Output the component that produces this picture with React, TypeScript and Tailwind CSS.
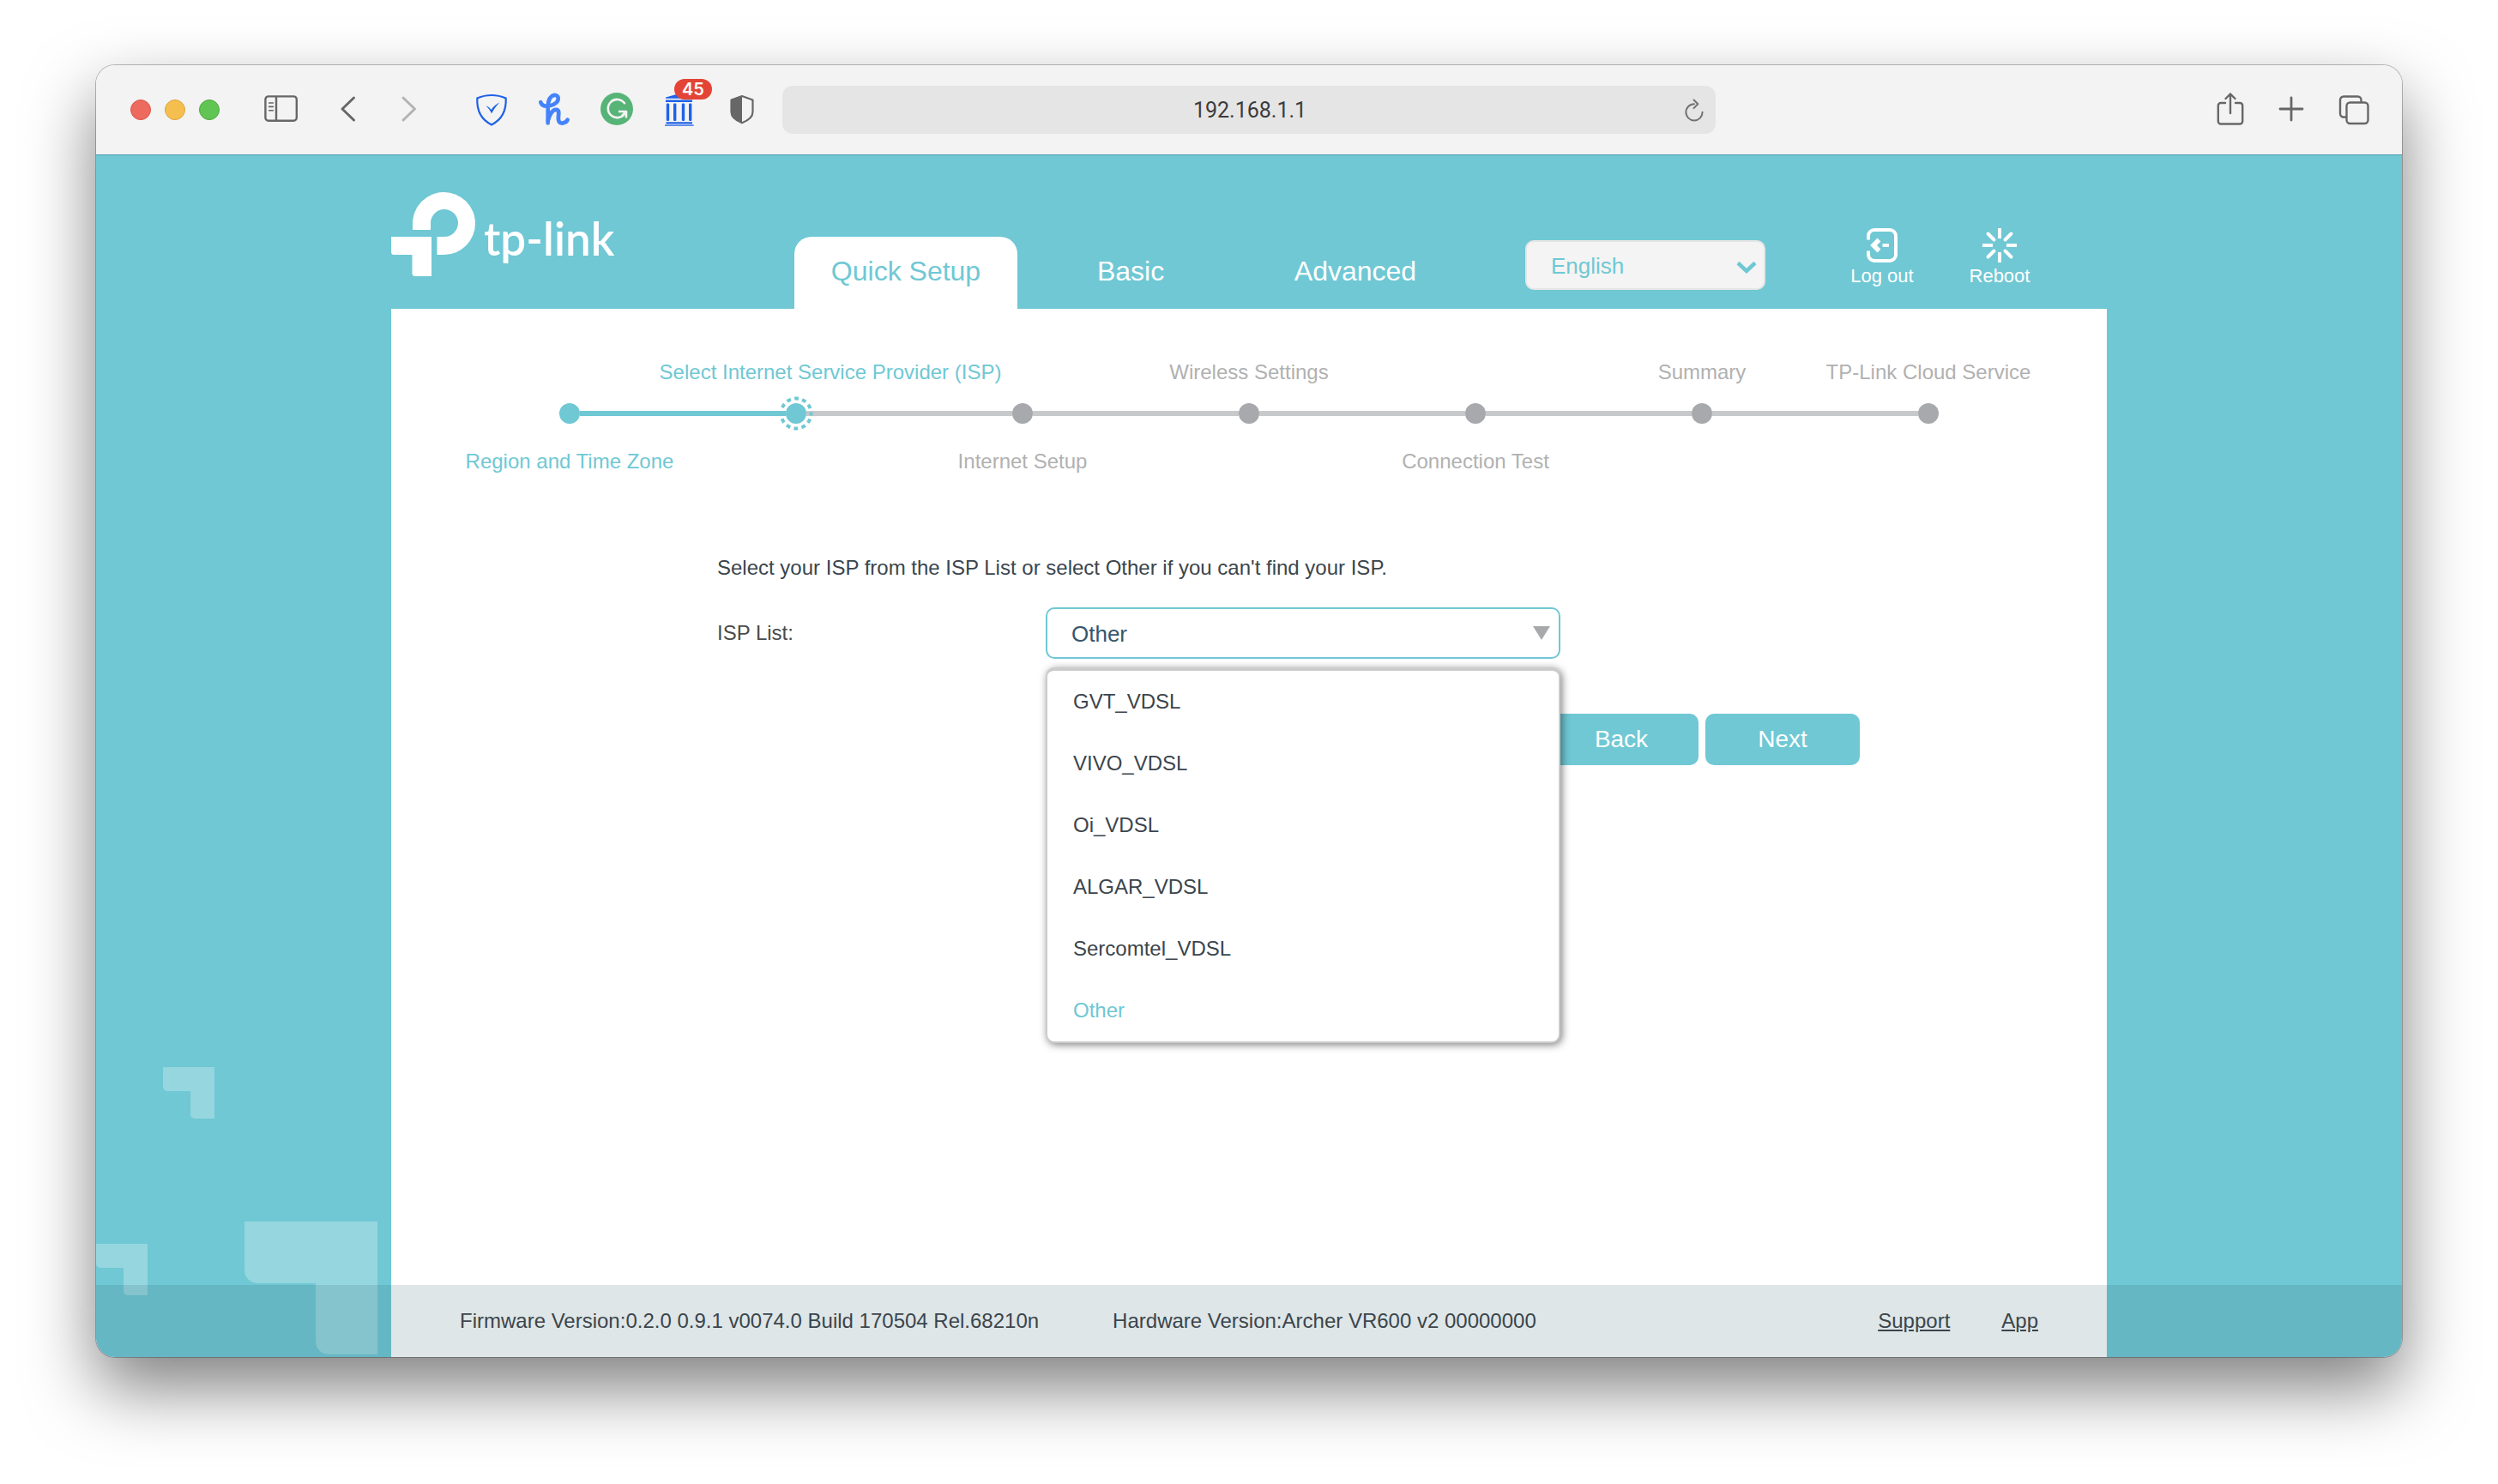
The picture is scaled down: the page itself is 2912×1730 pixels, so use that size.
import React from "react";

const ISPS = ["GVT_VDSL", "VIVO_VDSL", "Oi_VDSL", "ALGAR_VDSL", "Sercomtel_VDSL", "Other"];

type Step = { label: string; place: "top" | "bottom"; state: "done" | "current" | "todo" };

const STEPS: Step[] = [
  { label: "Region and Time Zone", place: "bottom", state: "done" },
  { label: "Select Internet Service Provider (ISP)", place: "top", state: "current" },
  { label: "Internet Setup", place: "bottom", state: "todo" },
  { label: "Wireless Settings", place: "top", state: "todo" },
  { label: "Connection Test", place: "bottom", state: "todo" },
  { label: "Summary", place: "top", state: "todo" },
  { label: "TP-Link Cloud Service", place: "top", state: "todo" },
];

function IconButton({ label, children }: { label: string; children: React.ReactNode }) {
  return (
    <button type="button" aria-label={label} className="relative flex size-10 shrink-0 items-center justify-center text-[#676767]">
      {children}
    </button>
  );
}

function SidebarIcon() {
  return (
    <svg viewBox="0 0 40 40" className="size-10" fill="none" stroke="currentColor" strokeWidth="2.4">
      <rect x="1.4" y="4.4" width="36.4" height="28.4" rx="3.5" />
      <path d="M14 4.4v28.4" />
      <path d="M5.6 12h4.8M5.6 16.4h4.8M5.6 20.8h4.8" strokeWidth="1.6" strokeLinecap="round" />
    </svg>
  );
}

function ChevronIcon({ forward }: { forward?: boolean }) {
  return (
    <svg viewBox="0 0 40 40" className={forward ? "size-10 text-[#b3b3b3]" : "size-10"} fill="none" stroke="currentColor" strokeWidth="3" strokeLinecap="round" strokeLinejoin="round">
      <path d={forward ? "M13 6 26.500 19 13 32" : "M26.500 6 13 19l13.500 13"} />
    </svg>
  );
}

function ShieldCheckIcon() {
  return (
    <svg viewBox="0 0 40 40" className="size-10 text-[#1f62e8]" fill="none">
      <path d="M20 3C25.500 3 31.500 4.200 36.700 6.500 37.300 20 33 31 20 37.400 7 31 2.700 20 3.300 6.500 8.500 4.200 14.500 3 20 3z" stroke="currentColor" strokeWidth="2.200" />
      <path d="M13.500 15.500c2.200.4 4.500 2.200 6.100 4.400C22 16.500 25.500 13.200 29.500 11.300c-3.200 3.400-6.600 7.800-9.400 13C18.300 20.500 16 17.800 13.500 15.500z" fill="currentColor" />
    </svg>
  );
}

function HoneyIcon() {
  return (
    <svg viewBox="0 0 40 40" className="size-10 text-[#4483fb]" fill="none" stroke="currentColor" strokeLinecap="round" strokeLinejoin="round">
      <path d="M4.300 11.200C5.500 15 9.500 16.300 15 15.300 20.500 14.300 25 10.700 24.700 6.500 24.500 3 20.500 1.800 17.200 4.200 13 7.400 12.700 13 12.700 19.500V35.500" strokeWidth="4.600" />
      <path d="M13 32C14.500 25 18.500 19.600 22.300 19.800 26.200 20 25.300 24.500 24.900 28.500 24.400 33.500 26.300 36 30 35.500 33 35 34.800 33.800 35.500 31.800" strokeWidth="4.800" />
    </svg>
  );
}

function GrammarlyIcon() {
  return (
    <svg viewBox="0 0 40 40" className="size-10" fill="none">
      <circle cx="20" cy="19" r="19" fill="#57b477" />
      <path d="M29 12.300A10.600 10.600 0 1 0 29.500 24" stroke="#f3f3f3" strokeWidth="2.600" strokeLinecap="round" />
      <path d="M22 22h9v7.500M30.500 22.500 26 27" stroke="#f3f3f3" strokeWidth="2.600" strokeLinejoin="round" />
    </svg>
  );
}

function ArchiveIcon() {
  return (
    <svg viewBox="0 0 40 40" className="size-10 text-[#1f62e8]" fill="currentColor">
      <path d="M4 6.700V5.500L20 1l15 4.500v1.200zM4 8.500h31v2.600H4z" />
      <rect x="4.800" y="12.500" width="3.400" height="20.500" rx="1.200" />
      <rect x="13" y="12.500" width="3.400" height="20.500" rx="1.200" />
      <rect x="22.800" y="12.500" width="3.400" height="20.500" rx="1.200" />
      <rect x="31" y="12.500" width="3.400" height="20.500" rx="1.200" />
      <path d="M4.500 34.300h30.500v2.200H4.500zM3 37.400h33.700v1.300H3z" />
    </svg>
  );
}

function HalfShieldIcon() {
  return (
    <svg viewBox="0 0 40 40" className="size-10" fill="none">
      <path d="M20 4 32.500 8.500V22.500C32.500 28 27 32.500 20 35.200 13 32.500 7.500 28 7.500 22.500V8.500z" stroke="currentColor" strokeWidth="2.200" strokeLinejoin="round" />
      <path d="M20 4v31.200C13 32.500 7.500 28 7.500 22.500V8.500z" fill="currentColor" />
    </svg>
  );
}

function BrowserBar() {
  return (
    <div className="grid h-[105px] grid-cols-[1fr_minmax(0,1088px)_1fr] items-center border-b border-[#4a9fad] bg-[#f3f3f3]">
      <div className="flex items-center pl-10">
        <div className="flex gap-4">
          <button type="button" aria-label="Close" className="size-6 rounded-full border border-[#d9564b] bg-[#ed6a5f]" />
          <button type="button" aria-label="Minimize" className="size-6 rounded-full border border-[#dba43d] bg-[#f5bf4f]" />
          <button type="button" aria-label="Zoom" className="size-6 rounded-full border border-[#50a73c] bg-[#61c554]" />
        </div>
        <div className="ml-13 flex">
          <IconButton label="Show sidebar"><SidebarIcon /></IconButton>
        </div>
        <div className="ml-[38px] flex gap-[31px]">
          <IconButton label="Back one page"><ChevronIcon /></IconButton>
          <IconButton label="Forward one page"><ChevronIcon forward /></IconButton>
        </div>
        <div className="ml-14 flex gap-[33px]">
          <IconButton label="Site protection"><ShieldCheckIcon /></IconButton>
          <IconButton label="Honey"><HoneyIcon /></IconButton>
          <IconButton label="Grammarly"><GrammarlyIcon /></IconButton>
          <IconButton label="Archive">
            <ArchiveIcon />
            <span className="absolute -top-4 left-3.5 flex h-6 w-11 items-center justify-center rounded-full bg-[#e34435] font-[Inter,sans-serif] text-[20px] font-semibold text-white">45</span>
          </IconButton>
          <IconButton label="Privacy report"><HalfShieldIcon /></IconButton>
        </div>
      </div>
      <div className="flex h-14 items-center rounded-xl bg-[#e5e5e5] pr-1 pl-[46px]">
        <input aria-label="Address" defaultValue="192.168.1.1" className="min-w-0 flex-1 bg-transparent pt-0.5 text-center font-[Roboto,sans-serif] text-[25px] text-[#3c3c3c] outline-none" />
        <IconButton label="Reload">
          <svg viewBox="0 0 40 40" className="size-10" fill="none" stroke="#727272" strokeWidth="2" strokeLinecap="round" strokeLinejoin="round">
            <path d="M19 13.200A9.600 9.600 0 1 0 28.600 22.800" />
            <path d="M18.500 8.500 23.300 13.300 18.500 18.100" />
          </svg>
        </IconButton>
      </div>
      <div className="flex items-center justify-end gap-8 pr-9">
        <IconButton label="Share">
          <svg viewBox="0 0 40 40" className="size-10" fill="none" stroke="currentColor" strokeWidth="2.400" strokeLinecap="round" strokeLinejoin="round">
            <path d="M14 12H8.800a3 3 0 0 0-3 3v18.500a3 3 0 0 0 3 3h22.400a3 3 0 0 0 3-3V15a3 3 0 0 0-3-3H26" />
            <path d="M20 24V1.500M14.500 7 20 1.500 25.500 7" />
          </svg>
        </IconButton>
        <IconButton label="New tab">
          <svg viewBox="0 0 40 40" className="size-10" fill="none" stroke="currentColor" strokeWidth="2.800" strokeLinecap="round">
            <path d="M19 6v26M6 19h26" />
          </svg>
        </IconButton>
        <IconButton label="Show tabs">
          <svg viewBox="0 0 40 40" className="size-10" fill="none" stroke="currentColor" strokeWidth="2.400">
            <rect x="11.500" y="11.500" width="25" height="24.500" rx="4" />
            <path d="M11.500 28.500H8a4 4 0 0 1-4-4V8.500a4 4 0 0 1 4-4h16.500a4 4 0 0 1 4 4v3" />
          </svg>
        </IconButton>
      </div>
    </div>
  );
}

function Logo() {
  return (
    <a href="#home" aria-label="tp-link" className="flex w-[470px] items-start pt-[43px] text-white">
      <svg viewBox="0 0 100 100" className="size-[100px] shrink-0" fill="currentColor">
        <path d="M25 44V37A36.500 36.500 0 1 1 61.500 73H53.500V52H61.500A16 16 0 1 0 46 36.500V44z" />
        <path d="M0 52H47V98H28a3.500 3.500 0 0 1-3.500-3.500V73H3.500A3.500 3.500 0 0 1 0 69.500z" />
      </svg>
      <span className="ml-2 pt-5.5 font-[Lato,sans-serif] text-[53px] leading-[64px] font-semibold">tp-link</span>
    </a>
  );
}

function Header() {
  return (
    <header className="mx-auto flex h-[179px] w-full max-w-[2000px]">
      <Logo />
      <nav className="flex items-end gap-0.5 text-[32px] leading-[80px] text-white">
        <a href="#quick" aria-current="page" className="h-[84px] w-65 rounded-t-[20px] bg-white text-center text-[#6fc8d4]">Quick Setup</a>
        <a href="#basic" className="h-[84px] w-65 text-center">Basic</a>
        <a href="#advanced" className="h-[84px] w-65 text-center">Advanced</a>
      </nav>
      <div className="relative mt-[99px] ml-17 h-[58px]">
        <select aria-label="Language" className="h-[58px] w-70 appearance-none rounded-[10px] border-2 border-[#e5e5e5] bg-[#f4f4f4] px-7 pt-0.5 text-[26px] text-[#6fc8d4]">
          <option>English</option>
        </select>
        <svg viewBox="0 0 24 16" className="pointer-events-none absolute top-6 right-2.5 h-4 w-6" fill="none" stroke="#6fc8d4" strokeWidth="4.500">
          <path d="M2 2.500 12 12 22 2.500" />
        </svg>
      </div>
      <div className="ml-22 flex gap-[41px] pt-[84px] text-[22px] leading-7 text-white">
        <button type="button" className="flex w-24 flex-col items-center gap-px self-start">
          <svg viewBox="0 0 40 42" className="h-[42px] w-10" fill="none" stroke="currentColor" strokeWidth="4">
            <path d="M4 14.500V10A7 7 0 0 1 11 3h18a7 7 0 0 1 7 7v22a7 7 0 0 1-7 7H11a7 7 0 0 1-7-7V27.500" />
            <path d="M16.500 14.500 10 21l6.500 6.500" strokeWidth="5.500" />
            <path d="M20.500 21H28" />
          </svg>
          Log out
        </button>
        <button type="button" className="flex w-24 flex-col items-center gap-px self-start">
          <svg viewBox="0 0 40 42" className="h-[42px] w-10" fill="none" stroke="currentColor" strokeWidth="4">
            <path d="M20 1v12M20 29v12M0 21h12M28 21h12" />
            <path d="M6.500 7.500l7 7M33.500 7.500l-7 7M6.500 34.500l7-7M33.500 34.500l-7-7" strokeLinecap="round" />
          </svg>
          Reboot
        </button>
      </div>
    </header>
  );
}

function StepItem({ step, index }: { step: Step; index: number }) {
  const active = step.state !== "todo";
  const line = "h-1.5 flex-1";
  const left = index === 0 ? "bg-transparent" : active ? "bg-[#6fc8d4]" : "bg-[#c8c9cb]";
  const right = index === STEPS.length - 1 ? "bg-transparent" : step.state === "done" ? "bg-[#6fc8d4]" : "bg-[#c8c9cb]";
  return (
    <li className={active ? "flex flex-col text-[#6fc8d4]" : "flex flex-col text-[#b1b1b1]"} aria-current={step.state === "current" ? "step" : undefined}>
      <span className={step.state === "current" ? "flex h-8 justify-center pl-20 whitespace-nowrap" : "flex h-8 justify-center whitespace-nowrap"}>
        {step.place === "top" ? step.label : ""}
      </span>
      <span className="my-5 flex items-center">
        <span className={`${line} ${left}`} />
        <span className={active ? "relative size-6 rounded-full bg-[#6fc8d4]" : "relative size-6 rounded-full bg-[#a7a9ac]"}>
          {step.state === "current" && (
            <svg viewBox="0 0 44 44" className="absolute -inset-2.5 size-11" fill="none" stroke="#6fc8d4" strokeWidth="4">
              <circle cx="22" cy="22" r="17.500" strokeDasharray="4.900 4.263" strokeDashoffset="2.450" />
            </svg>
          )}
        </span>
        <span className={`${line} ${right}`} />
      </span>
      <span className="mt-2 flex h-8 justify-center whitespace-nowrap">{step.place === "bottom" ? step.label : ""}</span>
    </li>
  );
}

function IspForm() {
  return (
    <form className="mt-[92px] pr-72 pl-[380px] text-[24px] leading-8 text-[#3b454c]">
      <p>Select your ISP from the ISP List or select Other if you can't find your ISP.</p>
      <div className="mt-[30px] flex items-center">
        <label htmlFor="isp" className="w-[383px] text-[#4b4b4b]">ISP List:</label>
        <div className="relative w-[600px]">
          <select id="isp" defaultValue="Other" className="h-15 w-full appearance-none rounded-[10px] border-2 border-[#6fc8d4] bg-white px-7 pt-0.5 text-[26px] text-[#36566a]">
            {ISPS.map((name) => (
              <option key={name}>{name}</option>
            ))}
          </select>
          <svg viewBox="0 0 20 16" className="pointer-events-none absolute top-5.5 right-3 h-4 w-5" fill="#a7a9ac">
            <path d="M0 0h20L10 16z" />
          </svg>
          <ul role="listbox" aria-label="ISP List" className="absolute inset-x-0 top-[70px] z-10 rounded-[10px] border-2 border-t-4 border-[#cccccc] bg-white shadow-[2px_2px_10px_rgba(0,0,0,0.5)]">
            {ISPS.map((name) => (
              <li key={name} role="option" aria-selected={name === "Other"} className={name === "Other" ? "flex h-18 items-center px-[30px] text-[#6fc8d4]" : "flex h-18 items-center px-[30px]"}>
                {name}
              </li>
            ))}
          </ul>
        </div>
      </div>
      <div className="mt-16 flex justify-end gap-2 text-[28px] text-white">
        <button type="button" className="h-15 w-45 rounded-[10px] bg-[#6fc8d4]">Back</button>
        <button type="button" className="h-15 w-45 rounded-[10px] bg-[#6fc8d4]">Next</button>
      </div>
    </form>
  );
}

function CornerShapes() {
  return (
    <svg viewBox="0 0 340 340" className="absolute bottom-0 left-0 size-[340px]" fill="#96d6df" aria-hidden="true">
      <path d="M78 2h60v60h-23a5 5 0 0 1-5-5V30H83a5 5 0 0 1-5-5z" />
      <path d="M0 208h60v60H37a5 5 0 0 1-5-5v-27H5a5 5 0 0 1-5-5z" />
      <path d="M173 182h155v155h-57a15 15 0 0 1-15-15v-68h-68a15 15 0 0 1-15-15z" />
    </svg>
  );
}

function Footer() {
  return (
    <footer className="relative bg-[#32646e]/16 text-[24px] leading-8 text-[#3b454c]">
      <div className="mx-auto flex h-21 w-full max-w-[2000px] items-center bg-[#dee6e7] px-20">
        <span>Firmware Version:0.2.0 0.9.1 v0074.0 Build 170504 Rel.68210n</span>
        <span className="ml-[86px]">Hardware Version:Archer VR600 v2 00000000</span>
        <a href="#support" className="ml-auto underline">Support</a>
        <a href="#app" className="ml-[60px] underline">App</a>
      </div>
    </footer>
  );
}

export default function App() {
  return (
    <div className="flex min-h-screen flex-col bg-white px-28 pt-[76px] pb-[148px] font-['Liberation_Sans',Arial,sans-serif]">
      <div className="flex flex-1 flex-col overflow-hidden rounded-[22px] shadow-[0_0_0_1px_rgba(0,0,0,0.25),0_36px_80px_rgba(0,0,0,0.5)]">
        <BrowserBar />
        <div className="relative flex flex-1 flex-col bg-[#6fc8d4]">
          <CornerShapes />
          <Header />
          <main className="relative mx-auto w-full max-w-[2000px] flex-1 bg-white">
            <ol className="grid grid-cols-7 px-19 pt-[58px] text-[24px] leading-8">
              {STEPS.map((step, index) => (
                <StepItem key={step.label} step={step} index={index} />
              ))}
            </ol>
            <IspForm />
          </main>
          <Footer />
        </div>
      </div>
    </div>
  );
}
